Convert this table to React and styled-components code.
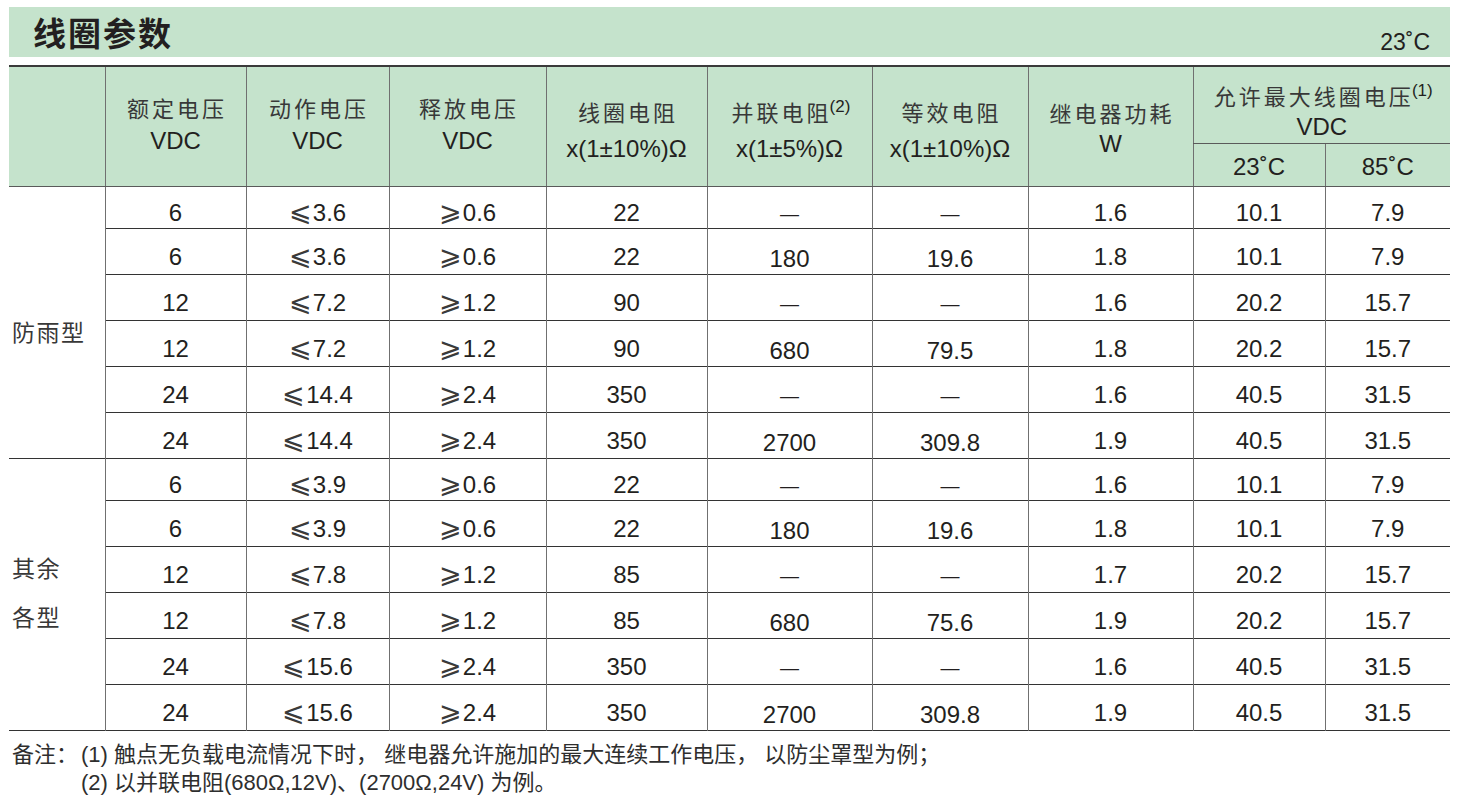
import React from 'react';
import styled, { createGlobalStyle } from 'styled-components';

const GREEN = '#c5e3cc';
const INK = '#231f20';
const VLINE = '#707070';
const HLINE = '#333333';
const CJK = '"Noto Sans CJK SC", sans-serif';
const LATIN = '"Liberation Sans", Arial, "Noto Sans CJK SC", sans-serif';

const Global = createGlobalStyle`
  html, body { margin: 0; padding: 0; background: #ffffff; }
  body { font-family: ${LATIN}; color: ${INK}; }
`;

const Page = styled.div`
  width: 1441px;
  padding: 7px 0 0 9px;
`;

const TitleBar = styled.div`
  display: flex;
  justify-content: space-between;
  align-items: flex-end;
  height: 50px;
  box-sizing: border-box;
  padding: 0 20px 0 24px;
  background: ${GREEN};
`;

const Title = styled.h1`
  align-self: center;
  margin: 0;
  font-family: ${CJK};
  font-size: 33px;
  font-weight: 700;
  line-height: 1;
  letter-spacing: 2px;
  color: ${INK};
`;

const Temp = styled.span`
  font-family: ${LATIN};
  font-size: 23px;
  line-height: 1;
  padding-bottom: 3px;
`;

const Table = styled.table`
  width: 1441px;
  margin-top: 8px;
  border-collapse: collapse;
  table-layout: fixed;
  border-top: 2px solid #3a3a3a;
  border-bottom: 1px solid ${HLINE};
`;

const Col = styled.col`
  width: ${(p) => p.$w}px;
`;

const Row = styled.tr`
  height: ${(p) => p.$h}px;
`;

const Th = styled.th`
  padding: ${(p) => p.$pt || 0}px 0 0;
  vertical-align: top;
  text-align: center;
  font-weight: 400;
  background: ${GREEN};
  border-left: ${(p) => (p.$first ? 'none' : `1px solid ${VLINE}`)};
  border-bottom: 1px solid #5a5a5a;
`;

const SubTh = styled.th`
  padding: 4px 0 0;
  vertical-align: middle;
  text-align: center;
  font-weight: 400;
  font-family: ${LATIN};
  font-size: 24px;
  line-height: 24px;
  background: ${GREEN};
  border-left: 1px solid ${VLINE};
  border-top: 1px solid ${VLINE};
  border-bottom: 1px solid #5a5a5a;
`;

const HeadText = styled.div`
  display: flex;
  flex-direction: column;
  align-items: center;
  line-height: ${(p) => p.$lh}px;
  white-space: nowrap;
`;

const Cjk = styled.span`
  display: block;
  font-family: ${CJK};
  font-size: 22px;
  letter-spacing: 3px;
  margin-right: -3px;
  color: #383838;
`;

const Unit = styled.span`
  display: block;
  font-family: ${LATIN};
  font-size: 24px;
  color: ${INK};
`;

const Sup = styled.sup`
  font-family: ${LATIN};
  font-size: 17px;
  line-height: 0;
  letter-spacing: 0;
  vertical-align: 9px;
  margin-left: -2px;
  color: ${INK};
`;

const GroupCell = styled.td`
  padding: ${(p) => p.$pt || 0}px 0 ${(p) => p.$pb || 0}px 3px;
  vertical-align: middle;
  text-align: left;
  border-top: 1px solid ${HLINE};
`;

const GroupLabel = styled.div`
  font-family: ${CJK};
  font-size: 23px;
  line-height: ${(p) => p.$lh || 30}px;
  letter-spacing: 1.5px;
  color: #383838;
`;

const Td = styled.td`
  padding: ${(p) => (p.$low ? 15 : 10)}px 0 0;
  vertical-align: middle;
  text-align: center;
  font-family: ${LATIN};
  font-size: 24px;
  line-height: 24px;
  white-space: nowrap;
  border-left: 1px solid ${VLINE};
  border-top: 1px solid ${HLINE};
`;

const Rel = styled.span`
  font-family: "DejaVu Sans", "Noto Sans CJK SC", sans-serif;
  font-size: 27px;
  font-weight: 200;
  line-height: 0;
  margin-right: 1px;
  color: #3a3a3a;
`;

const Dash = styled.span`
  font-family: ${LATIN};
  font-size: 19px;
`;

const Notes = styled.div`
  display: grid;
  grid-template-columns: auto 1fr;
  column-gap: 3px;
  margin-top: 10px;
  padding-left: 3px;
  font-family: ${LATIN};
  font-size: 22px;
  line-height: 28px;
  color: #2e2e2e;
`;

const NoteLabel = styled.span`
  grid-row: 1 / span 2;
`;

const NoteLine = styled.span`
  white-space: nowrap;
`;

const widths = [96, 141, 143, 157, 161, 165, 156, 165, 132, 125];

const groups = [
  {
    label: ['防雨型'],
    pt: 16,
    pb: 0,
    lh: 30,
    rows: [
      ['6', '≤3.6', '≥0.6', '22', '', '', '1.6', '10.1', '7.9'],
      ['6', '≤3.6', '≥0.6', '22', '180', '19.6', '1.8', '10.1', '7.9'],
      ['12', '≤7.2', '≥1.2', '90', '', '', '1.6', '20.2', '15.7'],
      ['12', '≤7.2', '≥1.2', '90', '680', '79.5', '1.8', '20.2', '15.7'],
      ['24', '≤14.4', '≥2.4', '350', '', '', '1.6', '40.5', '31.5'],
      ['24', '≤14.4', '≥2.4', '350', '2700', '309.8', '1.9', '40.5', '31.5'],
    ],
  },
  {
    label: ['其余', '各型'],
    pt: 0,
    pb: 6,
    lh: 49,
    rows: [
      ['6', '≤3.9', '≥0.6', '22', '', '', '1.6', '10.1', '7.9'],
      ['6', '≤3.9', '≥0.6', '22', '180', '19.6', '1.8', '10.1', '7.9'],
      ['12', '≤7.8', '≥1.2', '85', '', '', '1.7', '20.2', '15.7'],
      ['12', '≤7.8', '≥1.2', '85', '680', '75.6', '1.9', '20.2', '15.7'],
      ['24', '≤15.6', '≥2.4', '350', '', '', '1.6', '40.5', '31.5'],
      ['24', '≤15.6', '≥2.4', '350', '2700', '309.8', '1.9', '40.5', '31.5'],
    ],
  },
];

function Value({ v }) {
  if (v === '') return <Dash>—</Dash>;
  if (v.startsWith('≤')) return (<><Rel>⩽</Rel>{v.slice(1)}</>);
  if (v.startsWith('≥')) return (<><Rel>⩾</Rel>{v.slice(1)}</>);
  return v;
}

const heads = [
  { cjk: '额定电压', unit: 'VDC', pt: 24, lh: 33 },
  { cjk: '动作电压', unit: 'VDC', pt: 24, lh: 33 },
  { cjk: '释放电压', unit: 'VDC', pt: 24, lh: 33 },
  { cjk: '线圈电阻', unit: 'x(1±10%)Ω', pt: 26, lh: 37 },
  { cjk: '并联电阻', sup: '(2)', unit: 'x(1±5%)Ω', pt: 26, lh: 37 },
  { cjk: '等效电阻', unit: 'x(1±10%)Ω', pt: 26, lh: 37 },
  { cjk: '继电器功耗', unit: 'W', pt: 29, lh: 32 },
];

export default function App() {
  return (
    <>
      <Global />
      <Page>
        <TitleBar>
          <Title>线圈参数</Title>
          <Temp>23˚C</Temp>
        </TitleBar>
        <Table>
          <colgroup>
            {widths.map((w, i) => (
              <Col key={i} $w={w} />
            ))}
          </colgroup>
          <thead>
            <Row $h={76}>
              <Th rowSpan={2} $first />
              {heads.map((h) => (
                <Th key={h.cjk + h.unit} rowSpan={2} $pt={h.pt}>
                  <HeadText $lh={h.lh}>
                    <Cjk>
                      {h.cjk}
                      {h.sup && <Sup>{h.sup}</Sup>}
                    </Cjk>
                    <Unit>{h.unit}</Unit>
                  </HeadText>
                </Th>
              ))}
              <Th colSpan={2} $pt={12}>
                <HeadText $lh={32}>
                  <Cjk>
                    允许最大线圈电压<Sup>(1)</Sup>
                  </Cjk>
                  <Unit>VDC</Unit>
                </HeadText>
              </Th>
            </Row>
            <Row $h={43}>
              <SubTh>23˚C</SubTh>
              <SubTh>85˚C</SubTh>
            </Row>
          </thead>
          <tbody>
            {groups.map((g, gi) =>
              g.rows.map((r, ri) => (
                <Row key={`${gi}-${ri}`} $h={ri === 0 ? 42 : 46}>
                  {ri === 0 && (
                    <GroupCell rowSpan={6} $pt={g.pt} $pb={g.pb}>
                      {g.label.map((l) => (
                        <GroupLabel key={l} $lh={g.lh}>
                          {l}
                        </GroupLabel>
                      ))}
                    </GroupCell>
                  )}
                  {r.map((v, ci) => (
                    <Td key={ci} $low={(ci === 4 || ci === 5) && v !== ''}>
                      <Value v={v} />
                    </Td>
                  ))}
                </Row>
              ))
            )}
          </tbody>
        </Table>
        <Notes>
          <NoteLabel>备注：</NoteLabel>
          <NoteLine>(1) 触点无负载电流情况下时， 继电器允许施加的最大连续工作电压， 以防尘罩型为例；</NoteLine>
          <NoteLine>(2) 以并联电阻(680Ω,12V)、(2700Ω,24V) 为例。</NoteLine>
        </Notes>
      </Page>
    </>
  );
}
